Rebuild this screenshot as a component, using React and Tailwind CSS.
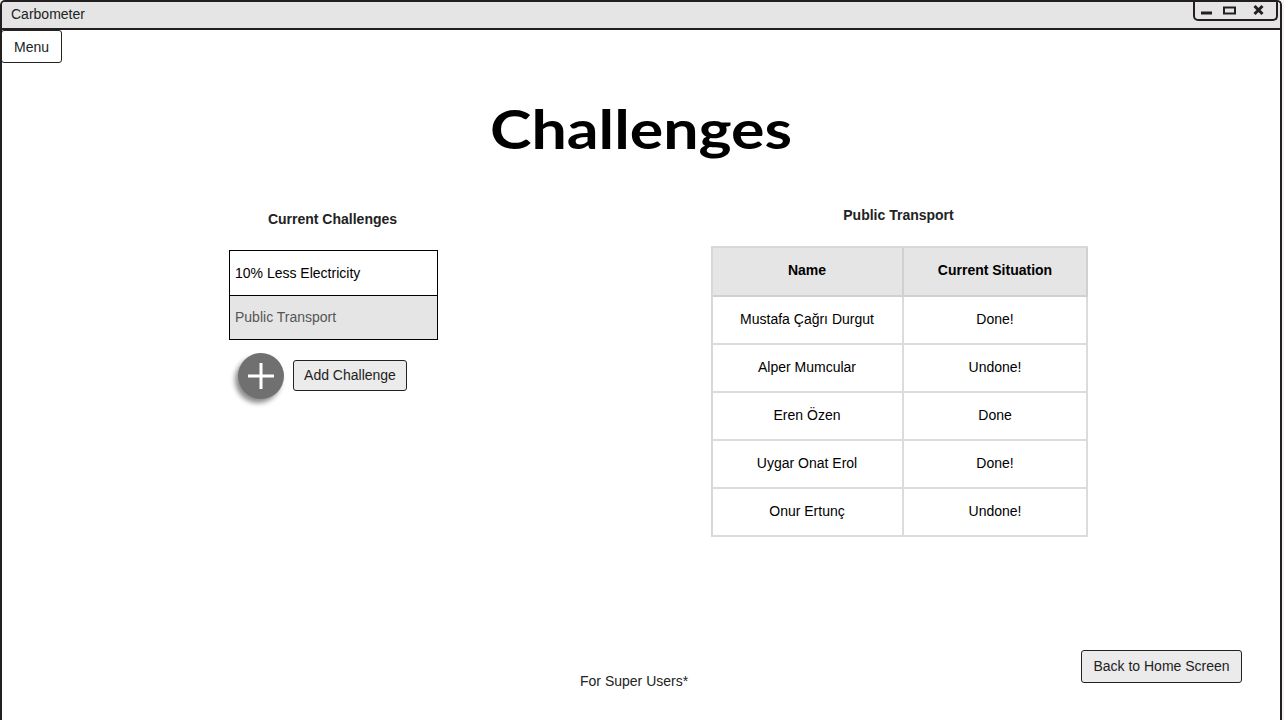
const rows = [
  ["Mustafa Çağrı Durgut", "Done!"],
  ["Alper Mumcular", "Undone!"],
  ["Eren Özen", "Done"],
  ["Uygar Onat Erol", "Done!"],
  ["Onur Ertunç", "Undone!"],
];

function TitleBar() {
  return (
    <header className="flex h-[28px] shrink-0 items-start justify-between border-b-2 border-[#231f20] bg-[#e5e5e5] pr-[2px] pl-[9px]">
      <span className="pt-[3px] leading-[18px]">Carbometer</span>
      <div className="h-[19px] w-[85px] rounded-b-[5px] border-x-2 border-b-2 border-[#231f20]">
        <svg width="81" height="17" viewBox="0 0 81 17" fill="none" stroke="#231f20">
          <path d="M6 11H17" strokeWidth="3" />
          <rect x="29" y="5.5" width="11" height="6" strokeWidth="2" />
          <path d="M59.5 4L67.5 12M67.5 4L59.5 12" strokeWidth="3" />
        </svg>
      </div>
    </header>
  );
}

export default function App() {
  return (
    <div className="h-[720px] w-[1284px] overflow-hidden bg-[#f6f3f3] pr-[2px] font-['Liberation_Sans',Arial,sans-serif] text-[14px] text-[#222]">
      <div className="flex h-full flex-col overflow-hidden rounded-t-[5px] border-x-2 border-t-2 border-[#231f20] bg-white">
        <TitleBar />
        <main className="flex flex-1 flex-col">
          <button className="-ml-px h-[33px] w-[61px] rounded-[3px] border border-[#222] bg-white pt-[2px]">Menu</button>
          <h1 className="mt-[33px] flex h-[72px] scale-x-[1.16] items-center justify-center pb-[7px] font-['Lato',sans-serif] text-[54px] leading-[64px] font-bold text-black">
            Challenges
          </h1>
          <div className="flex h-[430px] items-start">
            <section className="mt-[42px] ml-[227px] w-[209px]">
              <h2 className="pr-[2px] text-center leading-[18px] font-bold">
                Current Challenges
              </h2>
              <ul className="mt-[22px] border border-black">
                <li className="flex h-[45px] items-center border-b border-black pl-[5px] text-black">10% Less Electricity</li>
                <li className="flex h-[43px] items-center bg-[#e5e5e5] pl-[5px] text-[#555]">Public Transport</li>
              </ul>
              <div className="mt-[13px] flex items-start pl-[9px]">
                <div className="flex size-[46px] items-center justify-center rounded-full bg-[#707070] shadow-[-3px_4px_5px_rgba(0,0,0,0.45)]">
                  <svg width="26" height="26" viewBox="0 0 26 26" stroke="white" strokeWidth="3">
                    <path d="M0 13H26M13 0V26" />
                  </svg>
                </div>
                <button className="mt-[7px] ml-[9px] h-[31px] w-[114px] rounded-[3px] border border-[#222] bg-[#ebebeb]">Add Challenge</button>
              </div>
            </section>
            <section className="mt-[38px] ml-[273px] w-[377px]">
              <h2 className="pr-[2px] text-center leading-[18px] font-bold">Public Transport</h2>
              <div className="mt-[22px] border-t-2 border-l-2 border-[#d8d8d8] text-black">
                <div className="grid h-[49px] grid-cols-[191px_184px] bg-[#e5e5e5] font-bold">
                  <div className="flex items-center justify-center border-r-2 border-b-2 border-[#d0d0d0] pr-px pb-[2px]">Name</div>
                  <div className="flex items-center justify-center border-r-2 border-b-2 border-[#d0d0d0] pb-[2px]">Current Situation</div>
                </div>
                {rows.map(([name, status]) => (
                  <div key={name} className="grid h-[48px] grid-cols-[191px_184px]">
                    <div className="flex items-center justify-center border-r-2 border-b-2 border-[#dcdcdc] pr-px pb-[2px]">{name}</div>
                    <div className="flex items-center justify-center border-r-2 border-b-2 border-[#dcdcdc] pb-[2px]">{status}</div>
                  </div>
                ))}
              </div>
            </section>
          </div>
          <footer className="flex items-start pt-[52px] pl-[578px]">
            <span className="mt-[22px] w-[120px] leading-[18px]">For Super Users*</span>
            <button className="ml-[381px] h-[33px] w-[161px] rounded-[3px] border border-[#222] bg-[#ebebeb]">Back to Home Screen</button>
          </footer>
        </main>
      </div>
    </div>
  );
}
